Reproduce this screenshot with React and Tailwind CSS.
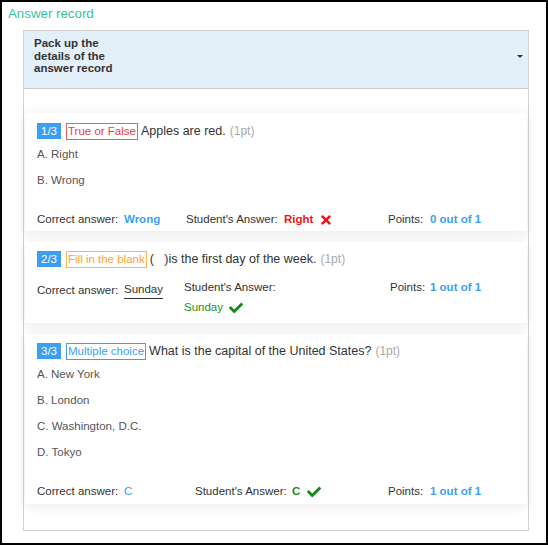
import { FaTimes, FaCheck } from "react-icons/fa";

const questions = [
  {
    no: "1/3",
    type: "True or False",
    tag: "border-[#f25c5c] text-[#f03a3a]",
    text: "Apples are red.",
    options: ["A. Right", "B. Wrong"],
  },
  {
    no: "2/3",
    type: "Fill in the blank",
    tag: "border-[#ffb74d] text-[#ffa42b]",
    text: "(\u00a0\u00a0\u00a0)is the first day of the week.",
    options: [],
  },
  {
    no: "3/3",
    type: "Multiple choice",
    tag: "border-[#3a9ff5] text-[#3a9ff5]",
    text: "What is the capital of the United States?",
    options: ["A. New York", "B. London", "C. Washington, D.C.", "D. Tokyo"],
  },
];

const Title = ({ q }) => (
  <div className="flex items-center h-[18px]">
    <span className="bg-[#3a9ff5] text-white text-[11.5px] leading-[16px] h-[16px] px-[4px]">{q.no}</span>
    <span className={`ml-[5px] border ${q.tag} text-[11.5px] leading-[15px] px-[1px]`}>{q.type}</span>
    <span className="ml-[3px] text-[12.5px] text-[#333]">{q.text}</span>
    <span className="ml-[4px] text-[12px] text-[#aaa]">(1pt)</span>
  </div>
);

const Options = ({ items }) => (
  <div className="mt-[2px]">
    {items.map((o) => (
      <div key={o} className="h-[26px] flex items-center text-[11.5px] text-[#555]">
        {o}
      </div>
    ))}
  </div>
);

export default function App() {
  return (
    <div
      className="w-[548px] h-[545px] border-2 border-black bg-white"
      style={{ fontFamily: '"Liberation Sans", Arial, sans-serif' }}
    >
      <div className="pl-[6px] pt-[3px] text-[13.3px] leading-[18px] text-[#31c4a4]">Answer record</div>
      <div className="ml-[21px] mt-[7px] w-[506px] h-[501px] border border-[#d0d0d0]">
        <div className="h-[58px] bg-[#e3f0fa] border-b border-[#c8ccd0] flex justify-between pl-[10px] pr-[4px] pt-[6px]">
          <div className="w-[90px] text-[11.5px] leading-[12.5px] font-bold text-[#333]">
            Pack up the details of the answer record
          </div>
          <div className="pt-[18px] pr-[1px]">
            <div className="w-0 h-0 border-l-[3px] border-r-[3px] border-t-[3px] border-l-transparent border-r-transparent border-t-[#333]" />
          </div>
        </div>

        <div className="px-px pt-[24px] flex flex-col gap-[11px]">
          {/* card 1 */}
          <div className="bg-white shadow-[0_2px_12px_rgba(0,0,0,0.09)] h-[118px] px-[12px] pt-[9px]">
            <Title q={questions[0]} />
            <Options items={questions[0].options} />
            <div className="mt-[16px] flex items-center h-[20px] text-[11.5px] text-[#333]">
              <span className="w-[87px]">Correct answer:</span>
              <span className="w-[62px] font-bold text-[#3a9ff5]">Wrong</span>
              <span className="w-[98px]">Student's Answer:</span>
              <span className="w-[104px] flex items-center">
                <span className="font-bold text-[#f01414]">Right</span>
                <FaTimes className="ml-[6px] text-[#f01414] text-[14px]" />
              </span>
              <span className="w-[42px]">Points:</span>
              <span className="font-bold text-[#3a9ff5]">0 out of 1</span>
            </div>
          </div>

          {/* card 2 */}
          <div className="bg-white shadow-[0_2px_12px_rgba(0,0,0,0.09)] h-[81px] px-[12px] pt-[8px]">
            <Title q={questions[1]} />
            <div className="mt-[10px] flex items-start text-[11.5px] text-[#333]">
              <div className="w-[147px] flex items-center pt-[4px]">
                <span className="w-[87px]">Correct answer:</span>
                <span className="border-b border-[#333] leading-[14px] pb-[2px]">Sunday</span>
              </div>
              <div className="w-[206px] pt-[2px]">
                <div className="leading-[14px]">Student's Answer:</div>
                <div className="mt-[5px] flex items-center text-[#1f8f1f]">
                  <span>Sunday</span>
                  <FaCheck className="ml-[6px] text-[#108a10] text-[14px]" />
                </div>
              </div>
              <span className="w-[40px] pt-[2px] leading-[14px]">Points:</span>
              <span className="pt-[2px] font-bold text-[#3a9ff5] leading-[14px]">1 out of 1</span>
            </div>
          </div>

          {/* card 3 */}
          <div className="bg-white shadow-[0_2px_12px_rgba(0,0,0,0.09)] h-[170px] px-[12px] pt-[8px]">
            <Title q={questions[2]} />
            <Options items={questions[2].options} />
            <div className="mt-[16px] flex items-center h-[20px] text-[11.5px] text-[#333]">
              <span className="w-[87px]">Correct answer:</span>
              <span className="w-[71px] text-[#3a9ff5]">C</span>
              <span className="w-[97px]">Student's Answer:</span>
              <span className="w-[96px] flex items-center">
                <span className="font-bold text-[#1f8f1f]">C</span>
                <FaCheck className="ml-[7px] text-[#108a10] text-[14px]" />
              </span>
              <span className="w-[42px]">Points:</span>
              <span className="font-bold text-[#3a9ff5]">1 out of 1</span>
            </div>
          </div>
        </div>
      </div>
    </div>
  );
}
